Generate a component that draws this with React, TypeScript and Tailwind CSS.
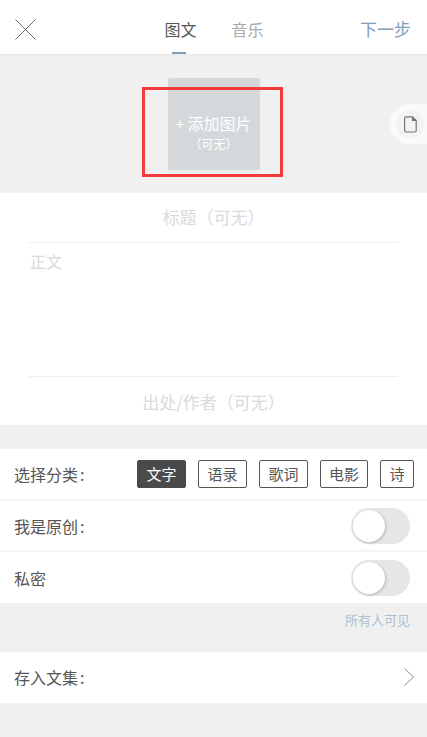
const font = { fontFamily: '"Noto Sans CJK SC", "Noto Sans", sans-serif' };

function Toggle() {
  return (
    <div className="h-9 w-[59px] rounded-full bg-[#e6e6e6]">
      <div className="ml-[2px] mt-[2px] h-8 w-8 rounded-full bg-white shadow-[1px_1px_3px_rgba(0,0,0,0.2)]" />
    </div>
  );
}

function Chip({ label, active, className }: { label: string; active?: boolean; className: string }) {
  return (
    <div className={`flex h-7 items-center justify-center rounded-[2px] border text-[15px] ${active ? "border-[#4a4a4a] bg-[#4a4a4a] text-white" : "border-[#555] bg-white text-[#555]"} ${className}`}>
      {label}
    </div>
  );
}

function Label({ text }: { text: string }) {
  return (
    <span>
      {text}
      <span className="ml-[2px]">:</span>
    </span>
  );
}

export default function App() {
  return (
    <div className="h-[737px] w-[427px] overflow-hidden bg-[#f0f0f0] [text-spacing-trim:space-all]" style={font}>
      {/* 顶部栏 */}
      <div className="relative flex h-[55px] items-center justify-between border-b border-[#e6e6e6] bg-white pl-[15px] pr-4 pt-[4px]">
        <svg width="21" height="21" viewBox="0 0 21 21" fill="none" stroke="#666" strokeWidth="1">
          <path d="M0.5 0.5L20.5 20.5M20.5 0.5L0.5 20.5" />
        </svg>
        <div className="flex items-center gap-[35px] pl-[32px] text-[16px]">
          <span className="relative text-[#555]">
            图文
            <span className="absolute -bottom-[13px] left-[8px] h-[2px] w-[14px] bg-[#7f9db8]" />
          </span>
          <span className="text-[#aaa]">音乐</span>
        </div>
        <span className="text-[17px] text-[#7f9db8]">下一步</span>
      </div>

      {/* 图片区域 */}
      <div className="relative flex h-[138px] justify-center pt-[23px]">
        <div className="flex h-[92px] w-[92px] flex-col items-center justify-center rounded-[2px] bg-[#d5d8db] pt-[18px] text-white">
          <span className="text-[16px] leading-[22px]">
            +<span className="ml-[3px]">添加图片</span>
          </span>
          <span className="text-[12px] leading-[20px]">（可无）</span>
        </div>
        <div className="absolute left-[142px] top-[32px] h-[90px] w-[141px] border-[3px] border-[#f43a3a]" />
        <div className="absolute right-0 top-[49px] flex h-10 w-[37px] items-center rounded-l-full bg-[#fafafa] pl-[6px]">
          <div className="flex h-[28px] w-[28px] items-center justify-center rounded-full bg-[#f3f3f3]">
            <svg width="13" height="17" viewBox="0 0 13 17" fill="none" stroke="#777" strokeWidth="1.2">
              <path d="M2 0.8H8.5L12.2 4.5V14.5A1.5 1.5 0 0 1 10.7 16H2A1.5 1.5 0 0 1 0.6 14.5V2.2A1.5 1.5 0 0 1 2 0.8Z" />
              <path d="M8.5 0.8V4.5H12.2" fill="#777" />
            </svg>
          </div>
        </div>
      </div>

      {/* 输入区域 */}
      <div className="bg-white px-[29px]">
        <div className="flex h-[50px] items-center justify-center border-b border-[#eeeeee] pb-[1px] text-[17px] text-[#dadada]">标题（可无）</div>
        <div className="h-[134px] border-b border-[#eeeeee] pl-[1px] pt-[6px] text-[16px] text-[#dadada]">正文</div>
        <div className="flex h-[48px] items-center justify-center pt-[1px] text-[17px] text-[#dadada]">出处/作者（可无）</div>
      </div>

      {/* 选项 */}
      <div className="mt-[24px] bg-white text-[16px] text-[#555]">
        <div className="flex h-[52px] items-center justify-between border-b-2 border-[#f5f5f5] pl-[14px] pr-[13px]">
          <Label text="选择分类" />
          <div className="flex gap-3">
            <Chip label="文字" active className="w-[49px]" />
            <Chip label="语录" className="w-[49px]" />
            <Chip label="歌词" className="w-[49px]" />
            <Chip label="电影" className="w-[48px]" />
            <Chip label="诗" className="w-[34px]" />
          </div>
        </div>
        <div className="flex h-[51px] items-center justify-between border-b-2 border-[#f5f5f5] pl-[14px] pr-[17px]">
          <Label text="我是原创" />
          <Toggle />
        </div>
        <div className="flex h-[51px] items-center justify-between pl-[14px] pr-[17px]">
          <span>私密</span>
          <Toggle />
        </div>
      </div>

      <div className="flex h-[49px] justify-end pr-[17px] pt-[8px] text-[13px] leading-[18px] text-[#a9bfd2]">所有人可见</div>

      <div className="flex h-[51px] items-center justify-between bg-white pb-[2px] pl-[14px] pr-[13px] text-[16px] text-[#555]">
        <Label text="存入文集" />
        <svg width="10" height="18" viewBox="0 0 10 18" fill="none" stroke="#888" strokeWidth="1">
          <path d="M0.5 0.5L9.5 9L0.5 17.5" />
        </svg>
      </div>
    </div>
  );
}
